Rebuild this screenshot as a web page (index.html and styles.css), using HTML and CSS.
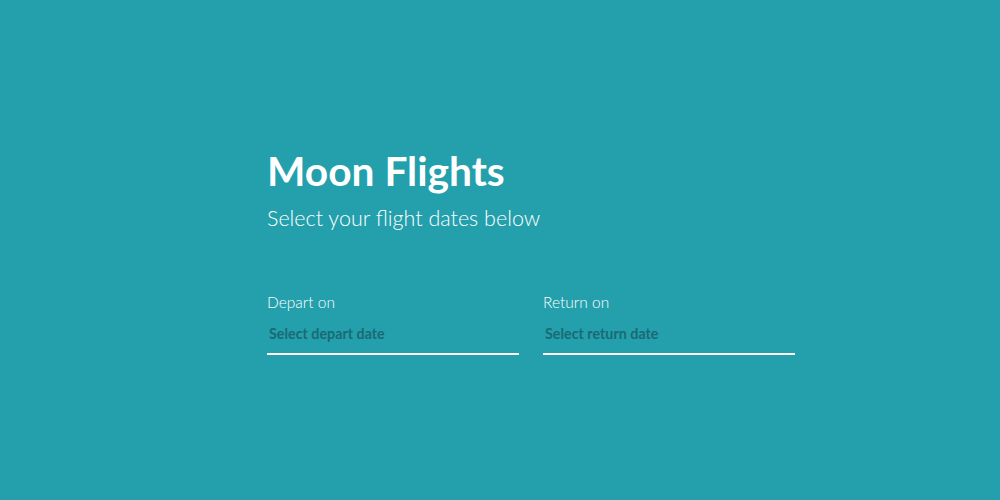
FILE: index.html
```html
<!DOCTYPE html>
<html lang="en">
<head>
    <meta charset="UTF-8">
    <meta name="viewport" content="width=device-width, initial-scale=1.0">
    <title>Moon Flights</title>
    <link rel="stylesheet" href="styles.css">
</head>
<body>
    <div class="container">
        <h1>Moon Flights</h1>
        <p class="subtitle">Select your flight dates below</p>

        <!-- Date pickers -->
        <form class="dates">
            <div class="form-group">
                <label for="depart">Depart on</label>
                <input type="text" id="depart" placeholder="Select depart date">
            </div>
            <div class="form-group">
                <label for="return">Return on</label>
                <input type="text" id="return" placeholder="Select return date">
            </div>
        </form>
    </div>
</body>
</html>
```

FILE: styles.css
```css
/* CSS styles */
body {
    font-family: Lato, "Open Sans", sans-serif;
    background-color: #23a0ac;
    color: #fff;
    margin: 0;
    padding: 0;
    height: 500px;
}

.container {
    width: 528px;
    margin-left: 267px;
    padding-top: 147px;
}

h1 {
    font-size: 40.7px;
    font-weight: 700;
    margin: 0;
    line-height: 48px;
}

.subtitle {
    font-size: 21.5px;
    font-weight: 300;
    margin: 8px 0 0;
    line-height: 30px;
}

.dates {
    display: flex;
    gap: 24px;
    margin-top: 59px;
}

.form-group {
    flex: 1;
}

label {
    display: block;
    font-size: 15.5px;
    font-weight: 300;
    line-height: 20px;
    margin-bottom: 8px;
}

input[type="text"] {
    width: 100%;
    box-sizing: border-box;
    font-family: inherit;
    font-size: 14.3px;
    font-weight: 700;
    padding: 5px 2px 11px;
    background: transparent;
    border: 0;
    border-bottom: 2px solid #fff;
    color: #1b6a73;
    outline: none;
}

input::placeholder {
    color: #1b6a73;
    opacity: 1;
}
```
